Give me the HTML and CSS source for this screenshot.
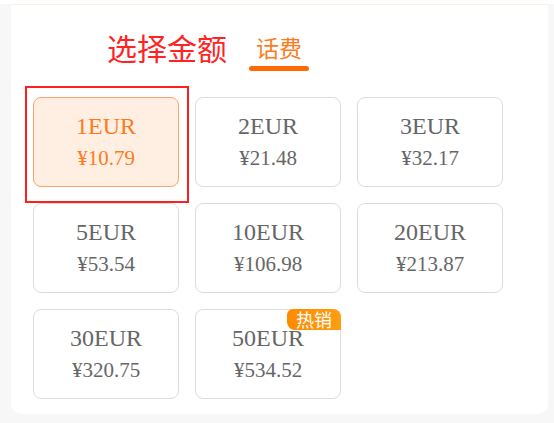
FILE: index.html
```html
<!DOCTYPE html>
<html lang="zh">
<head>
<meta charset="utf-8">
<title>选择金额</title>
<link rel="stylesheet" href="styles.css">
</head>
<body>
<div class="panel">
  <div class="header">
    <h1 class="title">选择金额</h1>
    <div class="tab">
      <span class="tab-label">话费</span>
      <span class="tab-bar"></span>
    </div>
  </div>
  <div class="grid">
    <div class="highlight"></div>
    <div class="card selected"><div class="name">1EUR</div><div class="price">¥10.79</div></div>
    <div class="card"><div class="name">2EUR</div><div class="price">¥21.48</div></div>
    <div class="card"><div class="name">3EUR</div><div class="price">¥32.17</div></div>
    <div class="card"><div class="name">5EUR</div><div class="price">¥53.54</div></div>
    <div class="card"><div class="name">10EUR</div><div class="price">¥106.98</div></div>
    <div class="card"><div class="name">20EUR</div><div class="price">¥213.87</div></div>
    <div class="card"><div class="name">30EUR</div><div class="price">¥320.75</div></div>
    <div class="card"><span class="badge">热销</span><div class="name">50EUR</div><div class="price">¥534.52</div></div>
  </div>
</div>
</body>
</html>
```

FILE: styles.css
```css
html, body {
  margin: 0;
  padding: 0;
}
body {
  width: 554px;
  height: 423px;
  background: linear-gradient(#ffffff 0 4px, #f7f7f7 4px);
  font-family: "Noto Sans CJK SC", "Noto Sans", sans-serif;
  overflow: hidden;
}
.panel {
  margin: 4px 6px 0 11px;
  height: 410px;
  background: #ffffff;
  border-top: 1px solid #fdf1e3;
  border-radius: 0 0 10px 10px;
  box-sizing: border-box;
}
.header {
  height: 92px;
  display: flex;
  align-items: flex-start;
  padding-left: 96px;
  box-sizing: border-box;
}
.title {
  margin: 22px 0 0 0;
  font-size: 30px;
  line-height: 40px;
  font-weight: 400;
  color: #ff2424;
}
.tab {
  margin: 27px 0 0 22px;
  width: 60px;
  display: flex;
  flex-direction: column;
  align-items: center;
}
.tab-label {
  font-size: 23px;
  line-height: 30px;
  color: #ff7a1c;
}
.tab-bar {
  margin-top: 4px;
  width: 60px;
  height: 5px;
  border-radius: 3px;
  background: #ff6a00;
}
.grid {
  position: relative;
  margin-left: 22px;
  display: grid;
  grid-template-columns: repeat(3, 146px);
  grid-auto-rows: 90px;
  column-gap: 16px;
  row-gap: 16px;
}
.card {
  position: relative;
  box-sizing: border-box;
  border: 1px solid #dcdcdc;
  border-radius: 8px;
  background: #ffffff;
  display: flex;
  flex-direction: column;
  align-items: center;
  justify-content: center;
  font-family: "Liberation Serif", "Times New Roman", serif;
  color: #666666;
}
.card.selected {
  background: #ffeee2;
  border-color: #ffa466;
  color: #ff7a1c;
}
.name {
  font-size: 24px;
  line-height: 32px;
}
.price {
  font-size: 21px;
  line-height: 32px;
}
.badge {
  position: absolute;
  top: -1px;
  right: -1px;
  width: 54px;
  height: 21px;
  border-radius: 6px 8px 0 8px;
  background: linear-gradient(90deg, #ff8a00, #ff9d10);
  color: #ffffff;
  font-family: "Noto Sans CJK SC", sans-serif;
  font-size: 18px;
  line-height: 21px;
  text-align: center;
}
.highlight {
  position: absolute;
  left: -8px;
  top: -11px;
  width: 164px;
  height: 117px;
  box-sizing: border-box;
  border: 2px solid #ff1f1f;
  pointer-events: none;
  z-index: 2;
}
```
